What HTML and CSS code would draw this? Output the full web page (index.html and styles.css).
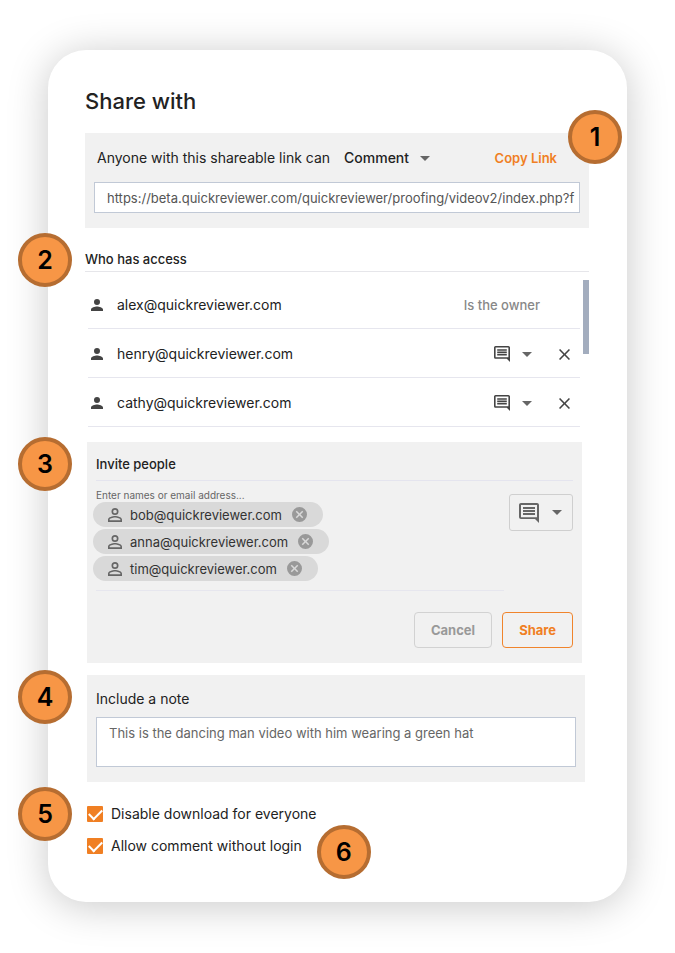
FILE: index.html
```html
<!DOCTYPE html>
<html lang="en">
<head>
    <meta charset="UTF-8">
    <meta name="viewport" content="width=device-width, initial-scale=1.0">
    <title>Share with</title>
    <link rel="stylesheet" href="styles.css">
</head>
<body>
    <!-- shared icons -->
    <svg class="sprite" aria-hidden="true">
        <symbol id="person" viewBox="4 4 16 16">
            <path d="M12 12a4 4 0 1 0 0-8 4 4 0 0 0 0 8zm0 2c-2.67 0-8 1.34-8 4v2h16v-2c0-2.66-5.33-4-8-4z"/>
        </symbol>
        <symbol id="person-outline" viewBox="4 4 16 16">
            <path d="M12 5.9a2.1 2.1 0 1 1 0 4.2 2.1 2.1 0 0 1 0-4.2m0 9c2.97 0 6.1 1.46 6.1 2.1v1.1H5.9V17c0-.64 3.13-2.1 6.1-2.1M12 4a4 4 0 1 0 0 8 4 4 0 0 0 0-8zm0 9c-2.67 0-8 1.34-8 4v3h16v-3c0-2.66-5.33-4-8-4z"/>
        </symbol>
        <symbol id="comment" viewBox="2 2 20 20">
            <path d="M21.99 4c0-1.1-.89-2-1.99-2H4c-1.1 0-2 .9-2 2v12c0 1.1.9 2 2 2h14l4 4-.01-18zM20 4v12.2H4V4h16zM6 12h12v2H6zm0-3h12v2H6zm0-3h12v2H6z"/>
        </symbol>
        <symbol id="caret" viewBox="0 0 10 5">
            <path d="M0 0h10L5 5z"/>
        </symbol>
        <symbol id="close" viewBox="5 5 14 14">
            <path d="M19 6.41L17.59 5 12 10.59 6.41 5 5 6.41 10.59 12 5 17.59 6.41 19 12 13.41 17.59 19 19 17.59 13.41 12z"/>
        </symbol>
        <symbol id="cancel" viewBox="2 2 20 20">
            <path d="M12 2a10 10 0 1 0 0 20 10 10 0 0 0 0-20zm5 13.59L15.59 17 12 13.41 8.41 17 7 15.59 10.59 12 7 8.41 8.41 7 12 10.59 15.59 7 17 8.41 13.41 12 17 15.59z"/>
        </symbol>
    </svg>

    <main class="card">
        <h1>Share with</h1>

        <section class="panel link-panel">
            <span class="badge badge-right">1</span>
            <div class="link-row">
                <label for="linkAccess">Anyone with this shareable link can</label>
                <span class="dropdown">
                    <select id="linkAccess">
                        <option>Comment</option>
                        <option>View</option>
                    </select>
                    <svg class="caret"><use href="#caret"/></svg>
                </span>
                <button class="copy" type="button">Copy Link</button>
            </div>
            <input class="link-url" type="text" aria-label="Shareable link" readonly value="https://beta.quickreviewer.com/quickreviewer/proofing/videov2/index.php?f">
        </section>

        <section class="access">
            <h2><span class="badge">2</span>Who has access</h2>
            <div class="access-body">
                <ul class="people">
                    <li>
                        <svg class="person"><use href="#person"/></svg>
                        <span class="email">alex@quickreviewer.com</span>
                        <span class="owner">Is the owner</span>
                    </li>
                    <li>
                        <svg class="person"><use href="#person"/></svg>
                        <span class="email">henry@quickreviewer.com</span>
                        <span class="role">
                            <svg class="comment"><use href="#comment"/></svg>
                            <svg class="caret"><use href="#caret"/></svg>
                            <select aria-label="Role of henry">
                                <option>Comment</option>
                                <option>View</option>
                            </select>
                        </span>
                        <button class="remove" type="button" aria-label="Remove henry"><svg><use href="#close"/></svg></button>
                    </li>
                    <li>
                        <svg class="person"><use href="#person"/></svg>
                        <span class="email">cathy@quickreviewer.com</span>
                        <span class="role">
                            <svg class="comment"><use href="#comment"/></svg>
                            <svg class="caret"><use href="#caret"/></svg>
                            <select aria-label="Role of cathy">
                                <option>Comment</option>
                                <option>View</option>
                            </select>
                        </span>
                        <button class="remove" type="button" aria-label="Remove cathy"><svg><use href="#close"/></svg></button>
                    </li>
                </ul>
                <div class="thumb"></div>
            </div>
        </section>

        <form class="panel invite">
            <h2><span class="badge">3</span>Invite people</h2>
            <div class="invite-body">
                <div class="invite-names">
                    <label for="names">Enter names or email address...</label>
                    <div class="chips">
                        <span class="chip">
                            <svg class="chip-person"><use href="#person-outline"/></svg>
                            bob@quickreviewer.com
                            <button type="button" aria-label="Remove bob"><svg><use href="#cancel"/></svg></button>
                        </span>
                        <span class="chip">
                            <svg class="chip-person"><use href="#person-outline"/></svg>
                            anna@quickreviewer.com
                            <button type="button" aria-label="Remove anna"><svg><use href="#cancel"/></svg></button>
                        </span>
                        <span class="chip">
                            <svg class="chip-person"><use href="#person-outline"/></svg>
                            tim@quickreviewer.com
                            <button type="button" aria-label="Remove tim"><svg><use href="#cancel"/></svg></button>
                        </span>
                    </div>
                    <input id="names" type="text">
                </div>
                <span class="role role-box">
                    <svg class="comment"><use href="#comment"/></svg>
                    <svg class="caret"><use href="#caret"/></svg>
                    <select aria-label="Role of invited people">
                        <option>Comment</option>
                        <option>View</option>
                    </select>
                </span>
            </div>
            <div class="actions">
                <button class="btn" type="button">Cancel</button>
                <button class="btn btn-share" type="button">Share</button>
            </div>
        </form>

        <section class="panel note">
            <span class="badge">4</span>
            <label for="note">Include a note</label>
            <textarea id="note">This is the dancing man video with him wearing a green hat</textarea>
        </section>

        <div class="options">
            <div class="option">
                <span class="badge">5</span>
                <input type="checkbox" id="noDownload" checked>
                <label for="noDownload">Disable download for everyone</label>
            </div>
            <div class="option">
                <input type="checkbox" id="noLogin" checked>
                <label for="noLogin">Allow comment without login</label>
                <span class="badge badge-after">6</span>
            </div>
        </div>
    </main>
</body>
</html>
```
FILE: styles.css
```css
* {
    box-sizing: border-box;
}
body {
    margin: 0;
    padding: 50px 48px;
    background-color: #fff;
    font-family: Inter, "Open Sans", sans-serif;
    font-size: 13px;
    line-height: 20px;
    color: #222;
}
h1, h2, ul {
    margin: 0;
    padding: 0;
    font-weight: 500;
}
button, input, select, textarea {
    font: inherit;
    color: inherit;
    margin: 0;
    padding: 0;
    border: none;
    border-radius: 0;
    background: none;
    appearance: none;
    outline: none;
}
button, select {
    cursor: pointer;
}
svg {
    display: block;
    flex: none;
    fill: #444;
}
.sprite {
    position: absolute;
    width: 0;
    height: 0;
}
.card {
    padding: 36px 38px 46px 37px;
    background-color: #fff;
    border-radius: 38px;
    box-shadow: 0 4px 40px rgba(0, 0, 0, 0.22);
}
h1 {
    font-size: 22px;
    line-height: 30px;
}
h2 {
    position: relative;
    font-size: 13px;
}
.panel {
    position: relative;
    background-color: #f1f1f1;
}

/* numbered markers */
.badge {
    position: absolute;
    left: -67px;
    top: 50%;
    width: 54px;
    height: 54px;
    margin-top: -27px;
    border: 4px solid #b66d31;
    border-radius: 50%;
    background-color: #f79646;
    color: #000;
    font-size: 25px;
    font-weight: 600;
    line-height: 46px;
    text-align: center;
}
.link-panel .badge-right {
    left: auto;
    right: -33px;
    top: 4px;
}

/* link */
.link-panel {
    margin-top: 17px;
    padding: 15px 9px;
}
.link-row {
    display: flex;
    align-items: center;
    padding: 0 23px 0 3px;
    margin-bottom: 14px;
    font-size: 14px;
}
.dropdown {
    display: flex;
    align-items: center;
    gap: 10px;
    margin-left: 14px;
    font-weight: 500;
}
.caret {
    width: 10px;
    height: 5px;
    fill: #666;
}
.copy {
    margin-left: auto;
    color: #f07f23;
    font-size: 13px;
    font-weight: 600;
}
.link-url {
    display: block;
    width: 100%;
    height: 31px;
    padding: 0 4px 0 12px;
    border: 1px solid #c1c9d6;
    background-color: #fff;
    color: #555;
}

/* access list */
.access h2 {
    margin-top: 21px;
    padding-bottom: 2px;
    border-bottom: 1px solid #e6e6ea;
}
.access-body {
    display: flex;
    justify-content: space-between;
    margin-top: 8px;
    padding-left: 3px;
}
.people {
    flex: 1;
    margin-right: 3px;
    list-style: none;
    font-size: 14px;
    font-weight: 400;
}
.people li {
    display: flex;
    align-items: center;
    height: 49px;
    padding: 2px 10px 0 3px;
    border-bottom: 1px solid #e6e6ee;
}
.person {
    width: 12px;
    height: 12px;
    margin-right: 14px;
}
.email {
    flex: 1;
}
.owner {
    margin-right: 30px;
    color: #888;
    font-size: 13px;
    font-weight: 500;
}
.role {
    position: relative;
    display: flex;
    align-items: center;
    gap: 12px;
}
.role select {
    position: absolute;
    inset: 0;
    width: 100%;
    opacity: 0;
}
.comment {
    width: 16px;
    height: 16px;
}
.remove {
    margin-left: 27px;
}
.remove svg {
    width: 11px;
    height: 11px;
}
.thumb {
    width: 6px;
    height: 74px;
    background-color: #a3adbe;
}

/* invite */
.invite {
    margin: 15px 7px 0 2px;
    padding: 12px 9px 15px;
}
.invite h2 {
    padding-bottom: 6px;
    border-bottom: 1px solid #e4e4ee;
}
.invite .badge {
    left: -78px;
    top: 10px;
}
.invite-body {
    display: flex;
    align-items: flex-start;
    gap: 5px;
    padding-top: 8px;
}
.invite-names {
    flex: 1;
}
.invite-names > label {
    display: block;
    margin-bottom: 1px;
    color: #666;
    font-size: 10px;
    line-height: 12px;
}
.invite-names > input {
    display: block;
    width: 100%;
    height: 10px;
    border-bottom: 1px solid #e6e6ee;
}
.chips {
    display: flex;
    flex-direction: column;
    align-items: flex-start;
    gap: 2px;
    margin-left: -3px;
}
.chip {
    display: flex;
    align-items: center;
    height: 25px;
    padding: 0 16px 0 15px;
    border-radius: 13px;
    background-color: #d9d9d9;
    color: #333;
}
.chip-person {
    width: 14px;
    height: 14px;
    margin-right: 8px;
    fill: #666;
}
.chip button {
    margin-left: 10px;
}
.chip button svg {
    width: 15px;
    height: 15px;
    fill: #999;
}
.role-box {
    height: 37px;
    margin-top: 5px;
    padding: 0 10px 0 9px;
    gap: 13px;
    border: 1px solid #cfcfcf;
    border-radius: 3px;
}
.role-box .comment {
    width: 20px;
    height: 20px;
    fill: #666;
}
.actions {
    display: flex;
    justify-content: flex-end;
    gap: 10px;
    margin-top: 21px;
}
.btn {
    height: 36px;
    padding: 0 16px;
    border: 1px solid #d2d2d2;
    border-radius: 4px;
    color: #999;
    font-weight: 700;
}
.btn-share {
    border-color: #f0842c;
    color: #f07f23;
}

/* note */
.note {
    margin: 12px 4px 0 2px;
    padding: 14px 9px 15px;
}
.note > label {
    display: block;
    font-size: 14px;
}
.note .badge {
    left: -69px;
    top: 22px;
}
.note textarea {
    display: block;
    width: 100%;
    height: 50px;
    margin-top: 8px;
    padding: 5px 12px;
    border: 1px solid #c1c9d6;
    background-color: #fff;
    color: #666;
    resize: none;
}

/* options */
.options {
    display: flex;
    flex-direction: column;
    align-items: flex-start;
    gap: 12px;
    margin: 22px 0 0 2px;
}
.option {
    position: relative;
    display: flex;
    align-items: center;
    gap: 8px;
    font-size: 14px;
}
.option .badge {
    left: -69px;
}
.option .badge-after {
    left: auto;
    right: -69px;
    margin-top: -21px;
}
.option input {
    display: grid;
    justify-items: center;
    align-items: start;
    width: 16px;
    height: 16px;
    border-radius: 1px;
    background-color: #f07f23;
}
.option input:checked::after {
    content: "";
    width: 11px;
    height: 6px;
    margin-top: 3px;
    border: solid #fff;
    border-width: 0 0 2px 2px;
    transform: rotate(-45deg);
}
```
